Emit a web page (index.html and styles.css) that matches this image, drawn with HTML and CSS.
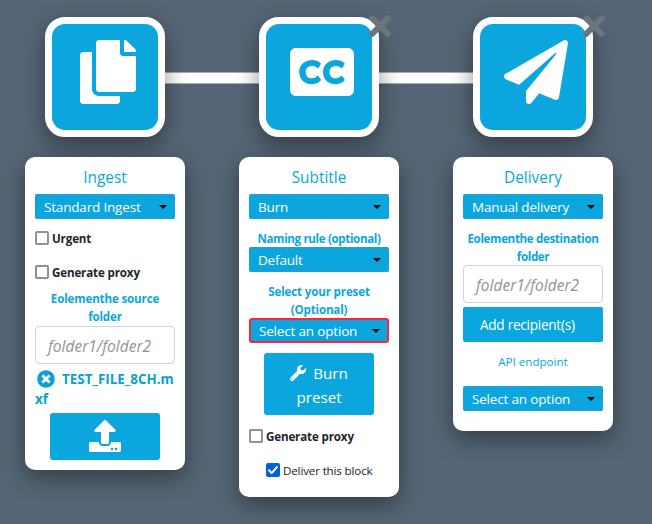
FILE: index.html
```html
<!DOCTYPE html>
<html lang="en">
<head>
<meta charset="utf-8">
<title>Workflow</title>
<link rel="stylesheet" href="styles.css">
</head>
<body>
<main class="workflow">
  <section class="step">
    <div class="node">
      <svg class="node-icon" viewBox="0 0 448 512"><path d="M320 448v40c0 13.255-10.745 24-24 24H24c-13.255 0-24-10.745-24-24V120c0-13.255 10.745-24 24-24h72v296c0 30.879 25.121 56 56 56h168zm0-344V0H152c-13.255 0-24 10.745-24 24v368c0 13.255 10.745 24 24 24h272c13.255 0 24-10.745 24-24V128H344c-13.2 0-24-10.8-24-24zm120.971-31.029L375.029 7.029A24 24 0 0 0 358.059 0H352v96h96v-6.059a24 24 0 0 0-7.029-16.97z"/></svg>
    </div>
    <div class="card">
      <h2 class="title">Ingest</h2>
      <div class="select">Standard Ingest</div>
      <label class="check first"><i class="box"></i>Urgent</label>
      <label class="check second"><i class="box"></i>Generate proxy</label>
      <p class="caption after-check">Eolementhe source<br>folder</p>
      <div class="input">folder1/folder2</div>
      <p class="file"><svg class="remove" viewBox="0 0 512 512"><path d="M256 8C119 8 8 119 8 256s111 248 248 248 248-111 248-248S393 8 256 8zm121.6 313.1c4.7 4.7 4.7 12.3 0 17L338 377.6c-4.7 4.7-12.3 4.7-17 0L256 312l-65.1 65.6c-4.7 4.7-12.3 4.7-17 0L134.4 338c-4.7-4.7-4.7-12.3 0-17l65.6-65-65.6-65.1c-4.7-4.7-4.7-12.3 0-17l39.6-39.6c4.7-4.7 12.3-4.7 17 0l65 65.7 65.1-65.6c4.7-4.7 12.3-4.7 17 0l39.6 39.6c4.7 4.7 4.7 12.3 0 17L312 256l65.6 65.1z"/></svg>TEST_FILE_8CH.m<br>xf</p>
      <div class="button upload"><svg class="upload-icon" viewBox="0 0 512 512"><path d="M296 384h-80c-13.3 0-24-10.7-24-24V192h-87.7c-17.8 0-26.7-21.5-14.1-34.1L242.3 5.7c7.5-7.5 19.8-7.5 27.3 0l152.2 152.2c12.6 12.6 3.7 34.1-14.1 34.1H320v168c0 13.3-10.7 24-24 24zm216-8v112c0 13.3-10.7 24-24 24H24c-13.3 0-24-10.7-24-24V376c0-13.3 10.7-24 24-24h136v8c0 30.9 25.1 56 56 56h80c30.9 0 56-25.1 56-56v-8h136c13.3 0 24 10.7 24 24zm-124 88c0-11-9-20-20-20s-20 9-20 20 9 20 20 20 20-9 20-20zm64 0c0-11-9-20-20-20s-20 9-20 20 9 20 20 20 20-9 20-20z"/></svg></div>
    </div>
  </section>

  <section class="step linked">
    <div class="node">
      <svg class="node-icon" viewBox="0 0 512 512"><path d="M464 64H48C21.5 64 0 85.5 0 112v288c0 26.5 21.5 48 48 48h416c26.5 0 48-21.5 48-48V112c0-26.5-21.5-48-48-48zM218.1 287.7c2.8-2.5 7.1-2.1 9.2.9l19.5 27.7c1.7 2.4 1.5 5.6-.5 7.7-53.6 56.8-172.8 32.1-172.8-67.9 0-97.3 121.7-119.5 172.5-70.1 2.1 2 2.5 3.2 1 5.7l-17.5 30.5c-1.9 3.1-6.2 4-9.1 1.7-40.8-32-94.6-14.9-94.6 31.2.1 48 51.1 70.4 92.3 32.6zm190.4 0c2.8-2.5 7.1-2.1 9.2.9l19.5 27.7c1.7 2.4 1.5 5.6-.5 7.7-53.5 56.9-172.7 32.1-172.7-67.9 0-97.3 121.7-119.5 172.5-70.1 2.1 2 2.5 3.2 1 5.7L420 222.2c-1.9 3.1-6.2 4-9.1 1.7-40.8-32-94.6-14.9-94.6 31.2 0 48 51 70.4 92.2 32.6z"/></svg>
      <svg class="close" viewBox="0 0 352 512"><path d="M242.72 256l100.07-100.07c12.28-12.28 12.28-32.19 0-44.48l-22.24-22.24c-12.28-12.28-32.19-12.28-44.48 0L176 189.28 75.93 89.21c-12.28-12.28-32.19-12.28-44.48 0L9.21 111.45c-12.28 12.28-12.28 32.19 0 44.48L109.28 256 9.21 356.07c-12.28 12.28-12.28 32.19 0 44.48l22.24 22.24c12.28 12.28 32.2 12.28 44.48 0L176 322.72l100.07 100.07c12.28 12.28 32.2 12.28 44.48 0l22.24-22.24c12.28-12.28 12.28-32.19 0-44.48L242.72 256z"/></svg>
    </div>
    <div class="card">
      <h2 class="title">Subtitle</h2>
      <div class="select">Burn</div>
      <p class="caption tight after-select">Naming rule (optional)</p>
      <div class="select">Default</div>
      <p class="caption after-select">Select your preset<br>(Optional)</p>
      <div class="select invalid">Select an option</div>
      <div class="button burn"><svg class="wrench" viewBox="0 0 512 512"><path d="M507.73 109.1c-2.24-9.03-13.54-12.09-20.12-5.51l-74.36 74.36-67.88-11.31-11.31-67.88 74.36-74.36c6.62-6.62 3.43-17.9-5.66-20.16-47.38-11.74-99.55.91-136.58 37.93-39.64 39.64-50.55 97.1-34.05 147.2L18.74 402.76c-24.99 24.99-24.99 65.51 0 90.5 24.99 24.99 65.51 24.99 90.5 0l213.21-213.21c50.12 16.71 107.47 5.68 147.37-34.22 37.07-37.07 49.7-89.32 37.91-136.73zM64 472c-13.25 0-24-10.75-24-24 0-13.26 10.75-24 24-24s24 10.74 24 24c0 13.25-10.75 24-24 24z"/></svg>Burn<br>preset</div>
      <label class="check third"><i class="box"></i>Generate proxy</label>
      <label class="check deliver"><i class="box checked"><svg viewBox="0 0 14 14"><path d="M3 7.3l2.7 2.8L11 4"/></svg></i>Deliver this block</label>
    </div>
  </section>

  <section class="step linked">
    <div class="node">
      <svg class="node-icon" viewBox="0 0 512 512"><path d="M476 3.2L12.5 270.6c-18.1 10.4-15.8 35.6 2.2 43.2L121 358.4l287.3-253.2c5.5-4.9 13.3 2.6 8.6 8.3L176 407v80.5c0 23.6 28.5 32.9 42.5 15.8L282 426l124.6 52.2c14.2 6 30.4-2.9 33-18.2l72-432C515 7.8 493.3-6.8 476 3.2z"/></svg>
      <svg class="close" viewBox="0 0 352 512"><path d="M242.72 256l100.07-100.07c12.28-12.28 12.28-32.19 0-44.48l-22.24-22.24c-12.28-12.28-32.19-12.28-44.48 0L176 189.28 75.93 89.21c-12.28-12.28-32.19-12.28-44.48 0L9.21 111.45c-12.28 12.28-12.28 32.19 0 44.48L109.28 256 9.21 356.07c-12.28 12.28-12.28 32.19 0 44.48l22.24 22.24c12.28 12.28 32.2 12.28 44.48 0L176 322.72l100.07 100.07c12.28 12.28 32.2 12.28 44.48 0l22.24-22.24c12.28-12.28 12.28-32.19 0-44.48L242.72 256z"/></svg>
    </div>
    <div class="card roomy">
      <h2 class="title">Delivery</h2>
      <div class="select">Manual delivery</div>
      <p class="caption tight after-select">Eolementhe destination<br>folder</p>
      <div class="input">folder1/folder2</div>
      <div class="button recipients">Add recipient(s)</div>
      <p class="endpoint">API endpoint</p>
      <div class="select">Select an option</div>
    </div>
  </section>
</main>
</body>
</html>
```

FILE: styles.css
```css
* { box-sizing: border-box; }

body {
  margin: 0;
  height: 524px;
  overflow: hidden;
  background: #566676;
  font-family: "Open Sans", "Noto Sans", sans-serif;
  color: #212529;
}

h2, p { margin: 0; font-weight: 400; }

.workflow {
  display: flex;
  align-items: flex-start;
  gap: 54px;
  padding: 17px 25px;
}

.step {
  position: relative;
  width: 160px;
  display: flex;
  flex-direction: column;
  align-items: center;
  gap: 20px;
}

.linked::before {
  content: "";
  position: absolute;
  z-index: -1;
  left: -74px;
  top: 55px;
  width: 94px;
  height: 10px;
  background: #fff;
  border: solid #a3abb3;
  border-width: 1px 0;
}

.node {
  position: relative;
  width: 120px;
  height: 120px;
  display: flex;
  justify-content: center;
  padding: 16px 0 0 6px;
  border: 7px solid #fff;
  border-radius: 20px;
  background: #fff;
  box-shadow: 0 8px 24px rgba(0, 0, 0, .42);
}

.node::before {
  content: "";
  position: absolute;
  inset: 0;
  border-radius: 13px;
  background: #0aa6dd;
}

.node-icon { position: relative; height: 64px; fill: #fff; }

.close {
  position: absolute;
  right: -18.6px;
  top: -14px;
  height: 32px;
  fill: #6c757d;
}

.card {
  position: relative;
  width: 160px;
  padding: 10px;
  border-radius: 10px;
  background: #fff;
  box-shadow: 0 8px 24px rgba(0, 0, 0, .42);
}

.roomy { padding-bottom: 20px; }

.title { height: 27px; font-size: 15.4px; line-height: 22px; text-align: center; color: #0aa6dd; }

.select {
  display: flex;
  align-items: center;
  justify-content: space-between;
  height: 25px;
  padding: 1px 8px 0 9px;
  border: 1px solid #2d9dc7;
  border-width: 1px 0;
  border-radius: 2px;
  background: #0aa6dd;
  color: #fff;
  font-size: 13.5px;
  letter-spacing: -.18px;
  line-height: 22px;
  white-space: nowrap;
}

.select::after {
  content: "";
  border: 4px solid transparent;
  border-top-color: #000;
  border-bottom: 0;
}

.invalid { border: 2px solid #fb2638; border-radius: 3px; padding: 1px 7px 0 8px; }

.check {
  display: flex;
  align-items: center;
  gap: 3px;
  height: 14px;
  font-size: 11.6px;
  letter-spacing: -.15px;
  font-weight: 700;
  line-height: 14px;
  padding-top: 1px;
  white-space: nowrap;
}

.box { width: 14px; height: 14px; margin-top: -1px; border: 2px solid #8f8f9d; border-radius: 2px; }
.checked { display: flex; border: 0; background: #0060df; }
.checked svg { width: 14px; fill: none; stroke: #fff; stroke-width: 2; stroke-linecap: round; stroke-linejoin: round; }

.first { margin-top: 12px; }
.second { margin-top: 20px; }
.third { margin-top: 14px; }
.deliver { margin: 20px 0 10px; padding-left: 17px; font-weight: 400; }

.caption { font-size: 11.6px; letter-spacing: -.16px; font-weight: 700; line-height: 18px; text-align: center; color: #0aa6dd; white-space: nowrap; }
.tight { letter-spacing: -.36px; }
.after-check { margin-top: 11px; }
.after-select { padding-top: 11px; margin-bottom: -1px; }

.input {
  height: 38px;
  padding-left: 12px;
  border: 1px solid #ced4da;
  border-radius: 4px;
  font-size: 15.5px;
  font-style: italic;
  line-height: 39px;
  color: #939393;
}

.file { height: 50px; padding-top: 5px; font-size: 13.4px; font-weight: 700; line-height: 20px; color: #0aa0d3; white-space: nowrap; }
.remove { width: 18px; height: 18px; margin: 0 7px 0 2px; vertical-align: -4px; fill: #0aa0d3; }

.button { background: #0aa6dd; color: #fff; border-radius: 3px; text-align: center; }
.upload { width: 110px; height: 47px; margin: -1px auto 0; padding-top: 7px; }
.upload-icon { width: 32px; height: 32px; fill: #fff; }
.burn { width: 110px; height: 62px; margin: 10px auto 0; padding-top: 8px; font-size: 15.2px; line-height: 24px; }
.wrench { width: 16px; height: 16px; margin-right: 7px; vertical-align: -2px; fill: #fff; }
.recipients { height: 35px; margin-top: 4px; padding-left: 17px; font-size: 13.6px; letter-spacing: -.27px; line-height: 35px; text-align: left; border-radius: 2px; }
.endpoint { height: 44px; padding-top: 11px; font-size: 11.6px; line-height: 18px; text-align: center; color: #0aa6dd; }
```
